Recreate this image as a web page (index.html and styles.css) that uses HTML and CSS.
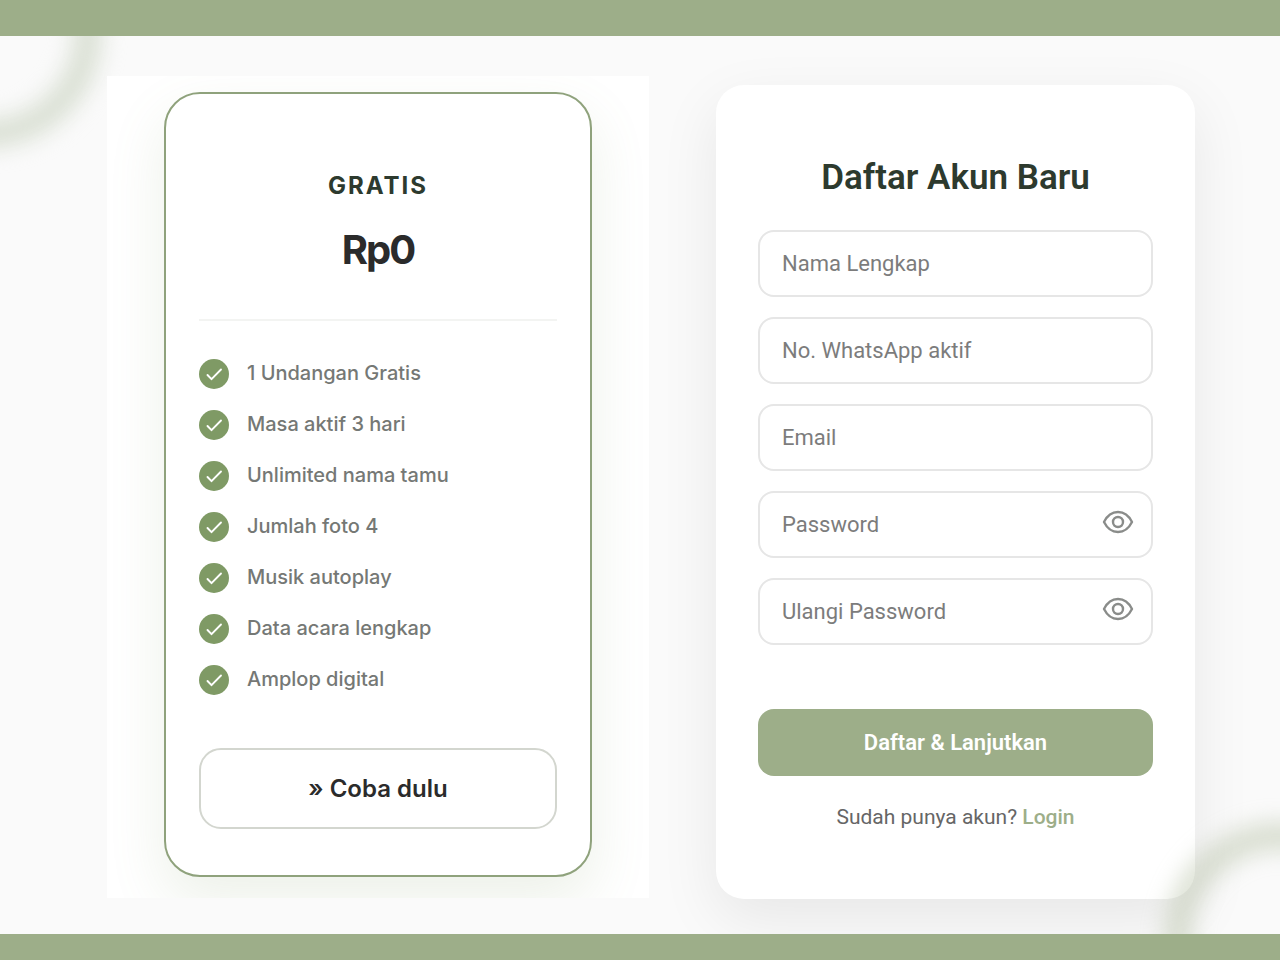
FILE: index.html
```html
<!DOCTYPE html>
<html lang="id">
<head>
    <meta charset="UTF-8">
    <meta name="viewport" content="width=device-width, initial-scale=1.0">
    <title>Daftar Akun Baru</title>
    <link rel="stylesheet" href="styles.css">
</head>
<body>
    <svg class="sprite" aria-hidden="true">
        <symbol id="check" viewBox="0 0 30 30">
            <circle cx="15" cy="15" r="15" fill="#7f9a65"/>
            <path d="M8.500 16l4 4.200L22 10.500" fill="none" stroke="#fff" stroke-width="1.900" stroke-linecap="round" stroke-linejoin="round"/>
        </symbol>
        <symbol id="eye" viewBox="0 0 32 24">
            <path d="M2 12C5.500 5 10.500 2 16 2s10.500 3 14 10c-3.500 7-8.500 10-14 10S5.500 19 2 12z" fill="none" stroke="#8a8c8a" stroke-width="2.400" stroke-linejoin="round"/>
            <circle cx="16" cy="12" r="5" fill="none" stroke="#8a8c8a" stroke-width="2.400"/>
        </symbol>
    </svg>

    <div class="bar bar-top"></div>

    <main class="content">
        <div class="ring ring-top"></div>
        <div class="ring ring-bottom"></div>

        <section class="plan">
            <div class="plan-card">
                <h2 class="plan-name">GRATIS</h2>
                <p class="plan-price">Rp0</p>
                <ul class="features">
                    <li><svg class="check"><use href="#check"/></svg>1 Undangan Gratis</li>
                    <li><svg class="check"><use href="#check"/></svg>Masa aktif 3 hari</li>
                    <li><svg class="check"><use href="#check"/></svg>Unlimited nama tamu</li>
                    <li><svg class="check"><use href="#check"/></svg>Jumlah foto 4</li>
                    <li><svg class="check"><use href="#check"/></svg>Musik autoplay</li>
                    <li><svg class="check"><use href="#check"/></svg>Data acara lengkap</li>
                    <li><svg class="check"><use href="#check"/></svg>Amplop digital</li>
                </ul>
                <button class="try-button" type="button">» Coba dulu</button>
            </div>
        </section>

        <form class="register">
            <h1 class="register-title">Daftar Akun Baru</h1>
            <div class="fields">
                <div class="field">
                    <input type="text" placeholder="Nama Lengkap" aria-label="Nama Lengkap">
                </div>
                <div class="field">
                    <input type="tel" placeholder="No. WhatsApp aktif" aria-label="No. WhatsApp aktif">
                </div>
                <div class="field">
                    <input type="email" placeholder="Email" aria-label="Email">
                </div>
                <div class="field">
                    <input type="password" placeholder="Password" aria-label="Password">
                    <button class="toggle" type="button" aria-label="Tampilkan password"><svg class="eye"><use href="#eye"/></svg></button>
                </div>
                <div class="field">
                    <input type="password" placeholder="Ulangi Password" aria-label="Ulangi Password">
                    <button class="toggle" type="button" aria-label="Tampilkan ulang password"><svg class="eye"><use href="#eye"/></svg></button>
                </div>
            </div>
            <button class="submit" type="submit">Daftar &amp; Lanjutkan</button>
            <p class="login">Sudah punya akun? <a href="#">Login</a></p>
        </form>
    </main>

    <div class="bar bar-bottom"></div>

    <script>
        document.querySelectorAll('.toggle').forEach((button) => {
            button.addEventListener('click', () => {
                const input = button.parentElement.querySelector('input');
                input.type = input.type === 'password' ? 'text' : 'password';
            });
        });
    </script>
</body>
</html>
```
FILE: styles.css
```css
* {
    margin: 0;
    padding: 0;
    box-sizing: border-box;
}

body {
    display: flex;
    flex-direction: column;
    min-height: 100vh;
    background-color: #fafafa;
    font-family: Roboto, sans-serif;
}

button,
input {
    font-family: inherit;
}

button {
    cursor: pointer;
}

.sprite {
    position: absolute;
    width: 0;
    height: 0;
}

.bar {
    background-color: #9dae89;
}

.bar-top {
    height: 36px;
}

.bar-bottom {
    height: 26px;
}

.content {
    position: relative;
    flex: 1;
    display: grid;
    grid-template-columns: 542fr 479fr;
    gap: 67px;
    align-items: start;
    padding: 40px 85px 35px 107px;
    overflow: hidden;
}

/* blurred circles in the corners */
.ring {
    position: absolute;
    width: 232px;
    height: 232px;
    border: 28px solid #dae0d4;
    border-radius: 50%;
    filter: blur(11px);
    pointer-events: none;
}

.ring-top {
    top: -120px;
    left: -130px;
}

.ring-bottom {
    right: -116px;
    bottom: -120px;
    z-index: 1;
    border-color: rgba(165, 180, 145, 0.38);
}

/* plan */
.plan {
    position: relative;
    padding: 16px 57px 21px;
    background-color: #fff;
    overflow: hidden;
    font-family: Inter, sans-serif;
}

.plan-card {
    padding: 76px 33px 46px;
    border: 2px solid #8fa27c;
    border-radius: 36px;
    background-color: #fff;
    box-shadow: 0 24px 56px rgba(127, 154, 101, 0.14);
    text-align: center;
}

.plan-name {
    color: #2d3a2e;
    font-size: 24px;
    font-weight: 700;
    line-height: 32px;
    letter-spacing: 2px;
}

.plan-price {
    padding: 24px 0 45px;
    border-bottom: 2px solid #f3f4f2;
    color: #2b2b2b;
    font-size: 40px;
    font-weight: 700;
    line-height: 48px;
    letter-spacing: -2px;
}

.features {
    display: grid;
    gap: 20px;
    padding: 37px 0 53px;
    list-style: none;
}

.features li {
    display: flex;
    align-items: center;
    gap: 18px;
    color: #757875;
    font-size: 20px;
    font-weight: 500;
    line-height: 31px;
}

.check {
    width: 30px;
    height: 30px;
}

.try-button {
    width: 100%;
    height: 81px;
    border: 2px solid #d3d6cf;
    border-radius: 22px;
    background-color: #fff;
    color: #2b2b2b;
    font-size: 24px;
    font-weight: 600;
}

/* form */
.register {
    position: relative;
    margin-top: 9px;
    padding: 72px 42px 68px;
    border-radius: 28px;
    background-color: #fff;
    box-shadow: 0 20px 60px rgba(0, 0, 0, 0.08);
    text-align: center;
}

.register-title {
    color: #2d3a2e;
    font-size: 35px;
    font-weight: 600;
    line-height: 42px;
}

.fields {
    display: grid;
    gap: 20px;
    margin: 31px 0 64px;
}

.field {
    position: relative;
}

.field input {
    display: block;
    width: 100%;
    height: 67px;
    padding: 0 22px;
    border: 2px solid #e6e6e6;
    border-radius: 16px;
    background-color: #fff;
    font-size: 22px;
}

.field input::placeholder {
    color: #7c7c7c;
}

.toggle {
    position: absolute;
    top: 19px;
    right: 19px;
    border: none;
    background: none;
}

.eye {
    display: block;
    width: 32px;
    height: 24px;
}

.submit {
    width: 100%;
    height: 67px;
    border: none;
    border-radius: 16px;
    background-color: #9dae89;
    color: #fff;
    font-size: 22px;
    font-weight: 600;
}

.login {
    margin-top: 27px;
    color: #666;
    font-size: 21px;
    line-height: 28px;
}

.login a {
    color: #9dae89;
    font-weight: 500;
    text-decoration: none;
}
```
